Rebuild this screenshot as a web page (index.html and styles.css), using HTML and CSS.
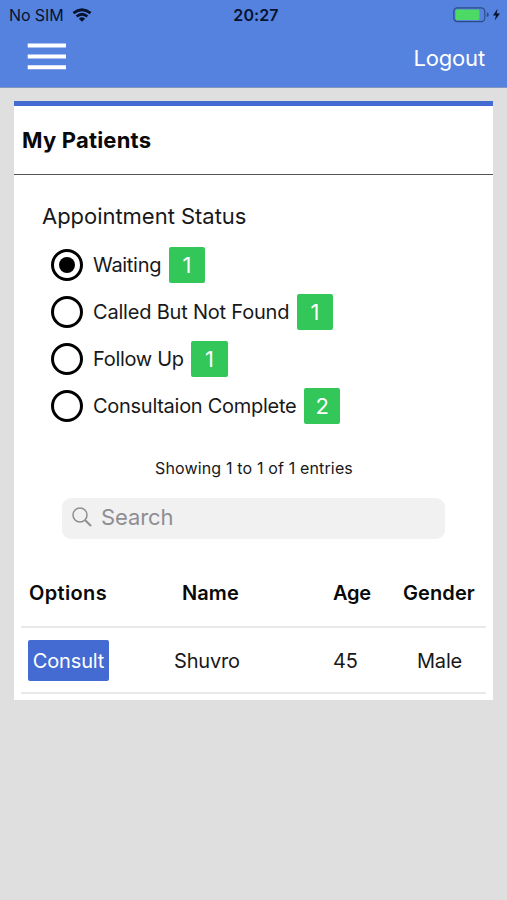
FILE: index.html
```html
<!DOCTYPE html>
<html lang="en">
<head>
<meta charset="utf-8">
<title>My Patients</title>
<link rel="stylesheet" href="styles.css">
</head>
<body>
<header class="header">
  <div class="status">
    <div class="carrier"><span class="sim">No SIM</span>
      <svg class="wifi" width="20" height="14" viewBox="0 0 20 14"><g fill="none" stroke="#07122f" stroke-width="2.8"><path d="M1.4 5.1Q10-1.6 18.6 5.1"/><path d="M4.6 8.5Q10 4 15.4 8.5"/></g><path d="M6.9 10.7Q10 8 13.1 10.7L10 13.7Z" fill="#07122f"/></svg>
    </div>
    <time class="clock">20:27</time>
    <svg class="battery" width="48" height="18" viewBox="0 0 48 18"><rect x=".8" y="1.8" width="31" height="13.8" rx="3.6" fill="none" stroke="#2d4b86" stroke-width="1.2"/><rect x="2.5" y="3.6" width="24" height="10.4" rx="1.4" fill="#4cd964"/><path d="M33.8 6.3Q35.8 7 35.8 8.7T33.8 11.1Z" fill="#2d4b86"/><path d="M44.5 2.8L40 9.5H43L41.7 14.5L47 7.6H43.7Z" fill="#07122f"/></svg>
  </div>
  <nav class="nav">
    <svg class="menu" width="40" height="28" viewBox="0 0 40 28"><path d="M.7 2.5H39M.7 13.4H39M.7 24.2H39" stroke="#fff" stroke-width="4"/></svg>
    <a class="logout">Logout</a>
  </nav>
</header>
<main class="card">
  <h1 class="title"><span>My Patients</span></h1>
  <section class="filters">
    <h2 class="heading"><span>Appointment Status</span></h2>
    <label class="option"><i class="radio checked"></i><span class="name waiting">Waiting</span><b class="badge">1</b></label>
    <label class="option"><i class="radio"></i><span class="name called">Called But Not Found</span><b class="badge">1</b></label>
    <label class="option"><i class="radio"></i><span class="name follow">Follow Up</span><b class="badge">1</b></label>
    <label class="option"><i class="radio"></i><span class="name complete">Consultaion Complete</span><b class="badge">2</b></label>
  </section>
  <p class="showing"><span>Showing 1 to 1 of 1 entries</span></p>
  <div class="search">
    <svg width="20" height="20" viewBox="0 0 20 20" fill="none" stroke="#8e8e92" stroke-width="1.5"><circle cx="8" cy="8" r="7"/><path d="M13 13L19 19" stroke-width="1.9"/></svg>
    <span>Search</span>
  </div>
  <div class="table">
    <div class="row head"><div class="c1"><span>Options</span></div><div class="c2"><span>Name</span></div><div class="c3"><span>Age</span></div><div class="c4"><span>Gender</span></div></div>
    <div class="row"><div class="c1"><button class="consult">Consult</button></div><div class="c2 person"><span>Shuvro</span></div><div class="c3"><span>45</span></div><div class="c4 gender"><span>Male</span></div></div>
  </div>
</main>
</body>
</html>
```
FILE: styles.css
```css
* { box-sizing: border-box; }
body { margin: 0; height: 900px; background: #dfdfdf; font-family: Inter, sans-serif; color: #18181a; overflow: hidden; white-space: nowrap; }
.header { height: 88px; background: #5582df; border-bottom: 1px solid #8296c3; color: #07122f; }
.status { height: 30px; display: grid; grid-template-columns: 1fr auto 1fr; align-items: center; padding: 0 6px 0 9px; }
.carrier { display: flex; align-items: center; gap: 8px; }
.sim { font-size: 16px; letter-spacing: -.1px; }
.clock { font-size: 16px; font-weight: 600; letter-spacing: .1px; padding-left: 2px; }
.battery { justify-self: end; }
.nav { height: 57px; display: flex; justify-content: space-between; padding: 12px 22px 0 27px; color: #fff; }
.menu { margin-top: 1px; }
.logout { font-size: 22px; line-height: 32px; letter-spacing: -.15px; }
.card { margin: 13px 14px 0; height: 599px; border-top: 5px solid #446bd1; background: #fff; }
.title { margin: 0; height: 69px; padding-left: 8px; font-size: 22px; font-weight: 700; line-height: 68px; letter-spacing: .2px; color: #09090a; border-bottom: 1px solid #555; }
.filters { padding: 21px 28px 0; }
.heading { margin: 0; font-size: 22px; line-height: 40px; font-weight: 400; letter-spacing: -.03px; }
.option { display: flex; align-items: center; height: 47.2px; padding-left: 9px; }
.filters .heading + .option { margin-top: 5px; }
.radio { width: 32px; height: 32px; border: 3.3px solid #000; border-radius: 50%; display: grid; place-items: center; margin-right: 10px; }
.checked::after { content: ""; width: 16px; height: 16px; border-radius: 50%; background: #000; }
.name { font-size: 20px; letter-spacing: -.3px; margin-right: 7.5px; }
.called { letter-spacing: -.2px; }
.complete { letter-spacing: -.28px; }
.badge { width: 36.5px; height: 36px; border-radius: 2px; background: #33c659; color: #fff; font-size: 22px; font-weight: 400; line-height: 36px; text-align: center; }
.showing { margin: 25px 0 0; padding-left: 141px; font-size: 16px; line-height: 26px; letter-spacing: .15px; }
.search { margin: 17px 48px 0; height: 41px; border-radius: 9px; background: #f1f1f2; display: flex; align-items: center; gap: 9px; padding-left: 10px; padding-bottom: 2px; color: #8e8e92; font-size: 22px; letter-spacing: -.1px; }
.table { margin: 20px 7px 0; }
.row { display: grid; grid-template-columns: 153px 151px 71px 1fr; align-items: center; height: 66px; border-bottom: 2px solid #e9e9e9; padding-top: 2px; font-size: 20px; letter-spacing: -.2px; }
.head { height: 69px; font-weight: 600; color: #09090a; letter-spacing: .1px; }
.head .c1 { letter-spacing: .35px; }
.head .c3 { letter-spacing: -.2px; }
.c1, .c2, .c3 { padding-left: 8px; }
.c4 { padding-left: 7px; }
.person { padding-left: 0; }
.gender { padding-left: 21px; }
.consult { display: block; width: 81px; height: 41px; margin-left: -1px; padding: 0; border: 0; border-radius: 2px; background: #446bd1; color: #fff; font: 400 20px Inter, sans-serif; letter-spacing: -.15px; }
```
